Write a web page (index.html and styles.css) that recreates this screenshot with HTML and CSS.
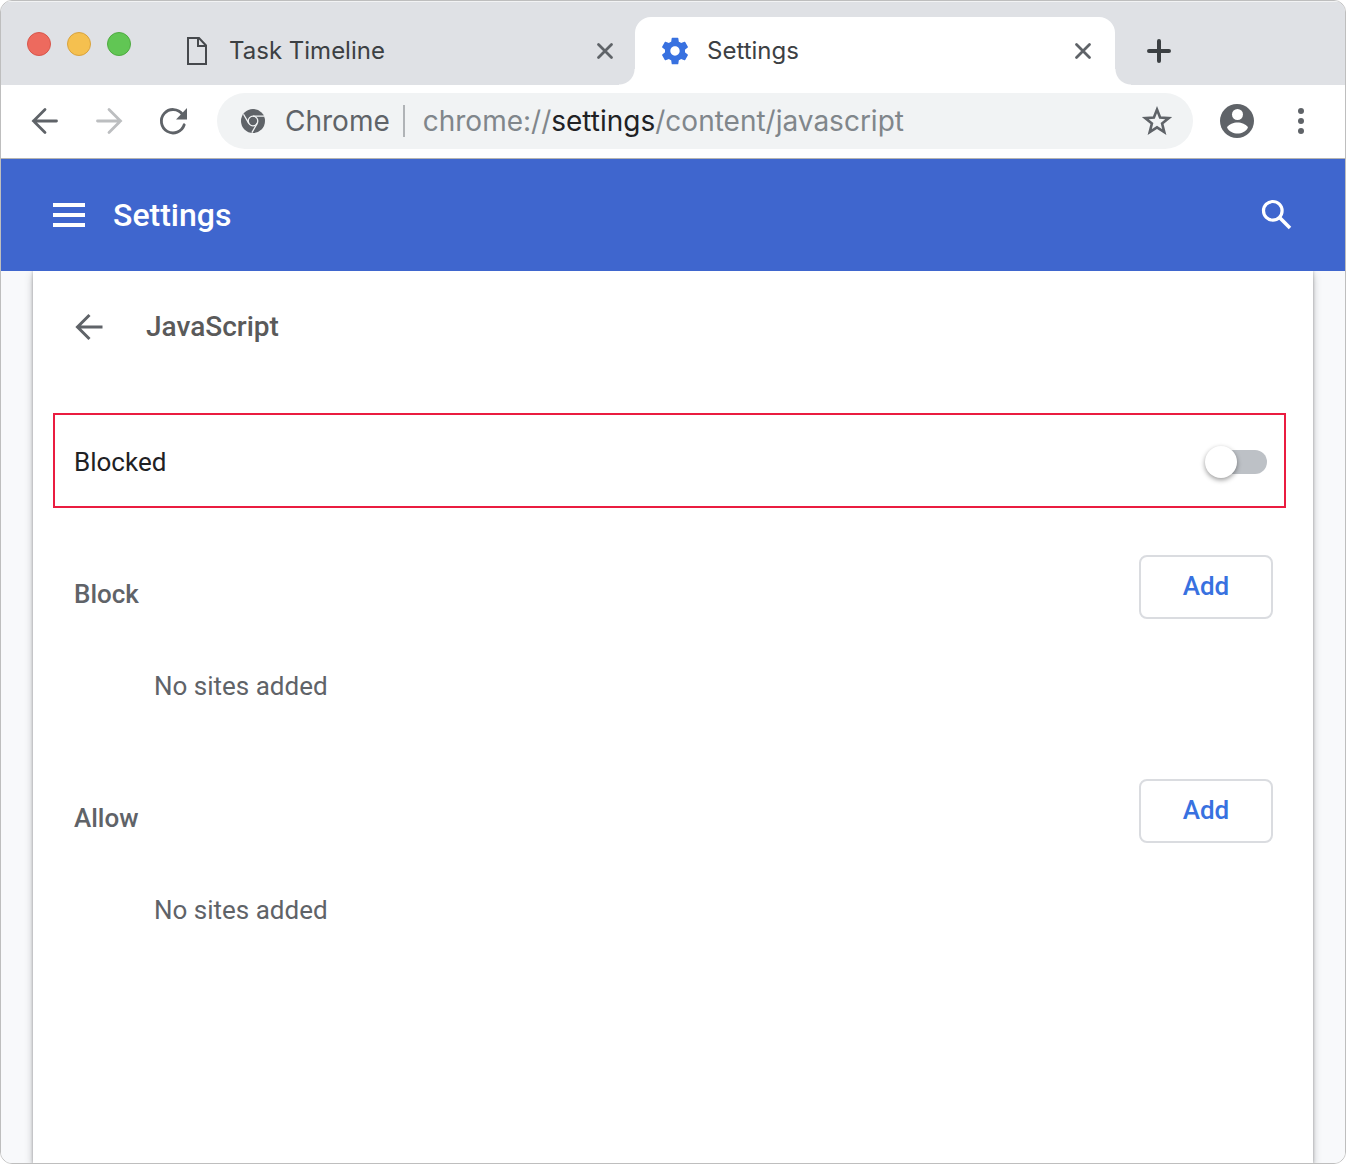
FILE: index.html
```html
<!DOCTYPE html>
<html lang="en">
<head>
<meta charset="utf-8">
<meta name="viewport" content="width=device-width, initial-scale=1">
<title>Settings - JavaScript</title>
<link rel="stylesheet" href="styles.css">
</head>
<body>
<div class="window">
  <div class="tab-strip">
    <div class="lights">
      <button class="light light-close" aria-label="Close window"></button>
      <button class="light light-minimize" aria-label="Minimize window"></button>
      <button class="light light-zoom" aria-label="Zoom window"></button>
    </div>
    <div class="tab">
      <svg class="icon" viewBox="0 0 32 32" aria-hidden="true"><path d="M7 3h11l7 7.500V29H7z M17 3v8H25" fill="none" stroke="#46494d" stroke-width="2"/></svg>
      <span class="tab-title">Task Timeline</span>
      <button class="icon-button" aria-label="Close Task Timeline"><svg class="icon" viewBox="0 0 32 32"><path d="M9.500 9.500l13 13M22.500 9.500l-13 13" fill="none" stroke="#5f6368" stroke-width="2.800" stroke-linecap="round"/></svg></button>
    </div>
    <div class="tab tab-active">
      <svg class="icon" viewBox="0 0 24 24" aria-hidden="true"><path fill="#3871e0" d="M19.430 12.980c.04-.32.07-.64.07-.98s-.03-.66-.07-.98l2.110-1.650c.19-.15.24-.42.12-.64l-2-3.460c-.12-.22-.39-.3-.61-.22l-2.490 1c-.52-.4-1.080-.73-1.690-.98l-.38-2.650C14.460 2.180 14.250 2 14 2h-4c-.25 0-.46.18-.49.42l-.38 2.650c-.61.25-1.170.59-1.690.98l-2.490-1c-.23-.09-.49 0-.61.22l-2 3.460c-.13.22-.07.49.12.64l2.110 1.650c-.04.32-.07.65-.07.98s.03.66.07.98l-2.110 1.650c-.19.15-.24.42-.12.64l2 3.460c.12.22.39.3.61.22l2.490-1c.52.4 1.080.73 1.690.98l.38 2.650c.03.24.24.42.49.42h4c.25 0 .46-.18.49-.42l.38-2.650c.61-.25 1.170-.59 1.690-.98l2.490 1c.23.09.49 0 .61-.22l2-3.460c.12-.22.07-.49-.12-.64l-2.110-1.650zM12 15.500c-1.930 0-3.500-1.570-3.500-3.500s1.570-3.500 3.500-3.500 3.500 1.570 3.500 3.500-1.570 3.500-3.500 3.500z"/></svg>
      <span class="tab-title">Settings</span>
      <button class="icon-button" aria-label="Close Settings"><svg class="icon" viewBox="0 0 32 32"><path d="M9.500 9.500l13 13M22.500 9.500l-13 13" fill="none" stroke="#5f6368" stroke-width="2.800" stroke-linecap="round"/></svg></button>
    </div>
    <button class="icon-button new-tab" aria-label="New tab"><svg class="icon" viewBox="0 0 32 32"><path d="M16 6v20M6 16h20" fill="none" stroke="#3c4043" stroke-width="4" stroke-linecap="round"/></svg></button>
  </div>

  <div class="toolbar">
    <div class="nav">
      <button class="icon-button" aria-label="Back"><svg class="icon" viewBox="0 0 32 32"><path d="M27.500 16H4.500M16 4.500L4.500 16l11.500 11.500" fill="none" stroke="#5f6368" stroke-width="2.800" stroke-linecap="round"/></svg></button>
      <button class="icon-button" aria-label="Forward" disabled><svg class="icon" viewBox="0 0 32 32"><path d="M4.500 16h23M16 4.500L27.500 16 16 27.500" fill="none" stroke="#bcbec0" stroke-width="2.800" stroke-linecap="round"/></svg></button>
      <button class="icon-button" aria-label="Reload"><svg class="icon" viewBox="0 0 32 32"><path d="M27.200 19.800A11.700 11.700 0 1 1 25.500 9.300" fill="none" stroke="#5f6368" stroke-width="2.800" stroke-linecap="round"/><path d="M30 3v11.500H19z" fill="#5f6368"/></svg></button>
    </div>
    <div class="omnibox">
      <svg class="chrome-icon" viewBox="0 0 24 24" aria-hidden="true"><circle cx="12" cy="12" r="12" fill="#5f6368"/><g fill="none" stroke="#f1f3f4" stroke-width="1.300"><circle cx="12" cy="12" r="4.800"/><path d="M12 7.200h11M7.800 14.400L2.500 5.200M16.200 14.400L10.900 23.600"/></g></svg>
      <span class="origin">Chrome</span>
      <div class="url" role="textbox" aria-label="Address" contenteditable="true" spellcheck="false">chrome://<span class="url-host">settings</span>/content/javascript</div>
      <button class="icon-button" aria-label="Bookmark this page"><svg class="icon" viewBox="0 0 32 32"><path d="M16 4.500l3.100 8 8.700.6-6.700 5.400 2.200 8.700L16 22.400l-7.300 4.800 2.200-8.700-6.700-5.400 8.700-.6z" fill="none" stroke="#5f6368" stroke-width="2.600"/></svg></button>
    </div>
    <button class="icon-button profile" aria-label="Profile"><svg class="avatar" viewBox="0 0 34 34"><circle cx="17" cy="17" r="17" fill="#5f6368"/><circle cx="17.500" cy="10.500" r="5.500" fill="#fff"/><path d="M7 23.500c2-3.500 6.500-5 10.500-5s8.500 1.500 10.500 5c-2 4-6.500 6-10.500 6s-8.500-2-10.500-6z" fill="#fff"/></svg></button>
    <button class="icon-button" aria-label="Menu"><svg class="icon" viewBox="0 0 32 32" fill="#5f6368"><circle cx="16" cy="6" r="3"/><circle cx="16" cy="16" r="3"/><circle cx="16" cy="26" r="3"/></svg></button>
  </div>

  <header class="header">
    <button class="icon-button" aria-label="Main menu"><svg class="icon" viewBox="0 0 32 32"><path d="M0 4h32v4H0zM0 14h32v4H0zM0 24h32v4H0z" fill="#fff"/></svg></button>
    <h1 class="header-title">Settings</h1>
    <button class="icon-button" aria-label="Search settings"><svg class="icon" viewBox="0 0 32 32"><circle cx="11.800" cy="11.800" r="9.300" fill="none" stroke="#fff" stroke-width="3.200"/><path d="M18.300 18.300L29 29" stroke="#fff" stroke-width="3.600"/></svg></button>
  </header>

  <main class="page">
    <div class="card">
      <div class="card-heading">
        <button class="icon-button" aria-label="Back to content settings"><svg class="icon" viewBox="0 0 32 32"><path d="M29.500 16H5M16.500 4L4.500 16l12 12" fill="none" stroke="#5f6368" stroke-width="3"/></svg></button>
        <h2 class="card-title">JavaScript</h2>
      </div>
      <div class="toggle-row">
        <label for="javascript-toggle">Blocked</label>
        <input class="toggle" id="javascript-toggle" type="checkbox">
      </div>
      <section class="sites">
        <div class="sites-heading">
          <h3 class="sites-title">Block</h3>
          <button class="add">Add</button>
        </div>
        <p class="empty">No sites added</p>
      </section>
      <section class="sites">
        <div class="sites-heading">
          <h3 class="sites-title">Allow</h3>
          <button class="add">Add</button>
        </div>
        <p class="empty">No sites added</p>
      </section>
    </div>
  </main>
</div>
</body>
</html>
```
FILE: styles.css
```css
* {
  box-sizing: border-box;
}

body {
  margin: 0;
  background: #fff;
  font-family: Roboto, sans-serif;
  font-size: 26px;
  line-height: 32px;
  color: #202124;
}

h1, h2, h3, p {
  margin: 0;
}

button {
  padding: 0;
  border: 0;
  background: none;
  font: inherit;
}

.window {
  display: flex;
  flex-direction: column;
  min-height: 100vh;
  border: 1px solid #bebebe;
  border-radius: 12px;
  overflow: hidden;
}

.icon {
  display: block;
  flex: none;
  width: 32px;
  height: 32px;
}

.icon-button {
  flex: none;
  width: 32px;
  height: 32px;
}

/* Tab strip */
.tab-strip {
  display: flex;
  height: 84px;
  padding: 16px 26px 0;
  background: #dfe1e5;
  box-shadow: inset 0 1px #f2f3f4;
  font-family: Inter, sans-serif;
  font-size: 24px;
  color: #3c4043;
}

.lights {
  display: flex;
  gap: 16px;
  padding-top: 15px;
  margin-right: 26px;
}

.light {
  width: 24px;
  height: 24px;
  border: 1px solid;
  border-radius: 50%;
}

.light-close {
  background: #ed6a5e;
  border-color: #d8564b;
}

.light-minimize {
  background: #f5c04f;
  border-color: #d9a33e;
}

.light-zoom {
  background: #61c654;
  border-color: #4fab41;
}

.tab {
  display: flex;
  flex: 0 1 480px;
  align-items: center;
  gap: 16px;
  min-width: 0;
  margin-right: -2px;
  padding: 0 16px 0 24px;
}

.tab-active {
  position: relative;
  margin-right: 0;
  border-radius: 16px 16px 0 0;
  background: #fff;
}

.tab-active::before,
.tab-active::after {
  content: "";
  position: absolute;
  bottom: 0;
  width: 16px;
  height: 16px;
}

.tab-active::before {
  right: 100%;
  background: radial-gradient(circle at 0 0, #dfe1e5 15px, #fff 16px);
}

.tab-active::after {
  left: 100%;
  background: radial-gradient(circle at 100% 0, #dfe1e5 15px, #fff 16px);
}

.tab-title {
  flex: 1;
  overflow: hidden;
  white-space: nowrap;
}

.new-tab {
  align-self: center;
  margin-left: 28px;
}

/* Toolbar */
.toolbar {
  display: flex;
  align-items: center;
  height: 74px;
  padding: 0 28px 2px;
  border-bottom: 1px solid #b4b4b2;
}

.nav {
  display: flex;
  gap: 32px;
}

.omnibox {
  display: flex;
  flex: 1;
  align-items: center;
  min-width: 0;
  height: 56px;
  margin: 0 27px 0 28px;
  padding: 0 20px 0 24px;
  border-radius: 28px;
  background: #f1f3f4;
  font-family: Inter, sans-serif;
  font-size: 28px;
  color: #5f6368;
}

.chrome-icon {
  flex: none;
  width: 24px;
  height: 24px;
  margin-right: 20px;
}

.origin {
  padding-right: 13px;
  border-right: 2px solid #b0b3b6;
}

.url {
  flex: 1;
  min-width: 0;
  padding-left: 18px;
  overflow: hidden;
  white-space: nowrap;
  color: #80868b;
}

.url-host {
  color: #202124;
}

.profile {
  width: 34px;
  height: 34px;
  margin-right: 31px;
}

.avatar {
  display: block;
  width: 34px;
  height: 34px;
}

/* Settings header */
.header {
  display: flex;
  align-items: center;
  gap: 28px;
  height: 112px;
  padding: 0 52px;
  background: #3f66ce;
  color: #fff;
}

.header-title {
  flex: 1;
  font-size: 32px;
  font-weight: 500;
}

/* Page content */
.page {
  display: flex;
  flex: 1;
  padding: 0 32px;
  background: #f8f9fb;
}

.card {
  flex: 1;
  padding: 0 27px 0 20px;
  background: #fff;
  box-shadow: 0 4px 8px rgba(60, 64, 67, 0.3), 0 0 3px rgba(60, 64, 67, 0.4);
  clip-path: inset(0 -32px);
}

.card-heading {
  display: flex;
  align-items: center;
  gap: 41px;
  height: 112px;
  padding-left: 20px;
}

.card-title {
  font-size: 28px;
  font-weight: 500;
  color: #5a5a5a;
}

.toggle-row {
  display: flex;
  align-items: center;
  justify-content: space-between;
  height: 95px;
  margin: 30px 0 47px;
  padding: 3px 17px 0 19px;
  border: 2px solid #ea1c40;
}

.toggle {
  position: relative;
  width: 56px;
  height: 24px;
  margin: 0;
  border-radius: 12px;
  background: #bdc1c6;
  appearance: none;
}

.toggle::before {
  content: "";
  position: absolute;
  top: -4px;
  left: -6px;
  width: 32px;
  height: 32px;
  border-radius: 50%;
  background: #fff;
  box-shadow: 0 2px 5px rgba(0, 0, 0, 0.4);
}

.toggle:checked {
  background: #8ab4f8;
}

.toggle:checked::before {
  left: 30px;
  background: #3871e0;
}

.sites {
  height: 224px;
  padding: 0 13px 0 21px;
  color: #5f6368;
}

.sites-heading {
  display: flex;
  align-items: flex-start;
  justify-content: space-between;
}

.sites-title {
  padding-top: 23px;
  font-size: 26px;
  font-weight: 500;
}

.add {
  width: 134px;
  height: 64px;
  padding-bottom: 2px;
  border: 2px solid #dadce0;
  border-radius: 8px;
  font-weight: 500;
  color: #3871e0;
}

.empty {
  padding: 51px 0 0 80px;
}
```
